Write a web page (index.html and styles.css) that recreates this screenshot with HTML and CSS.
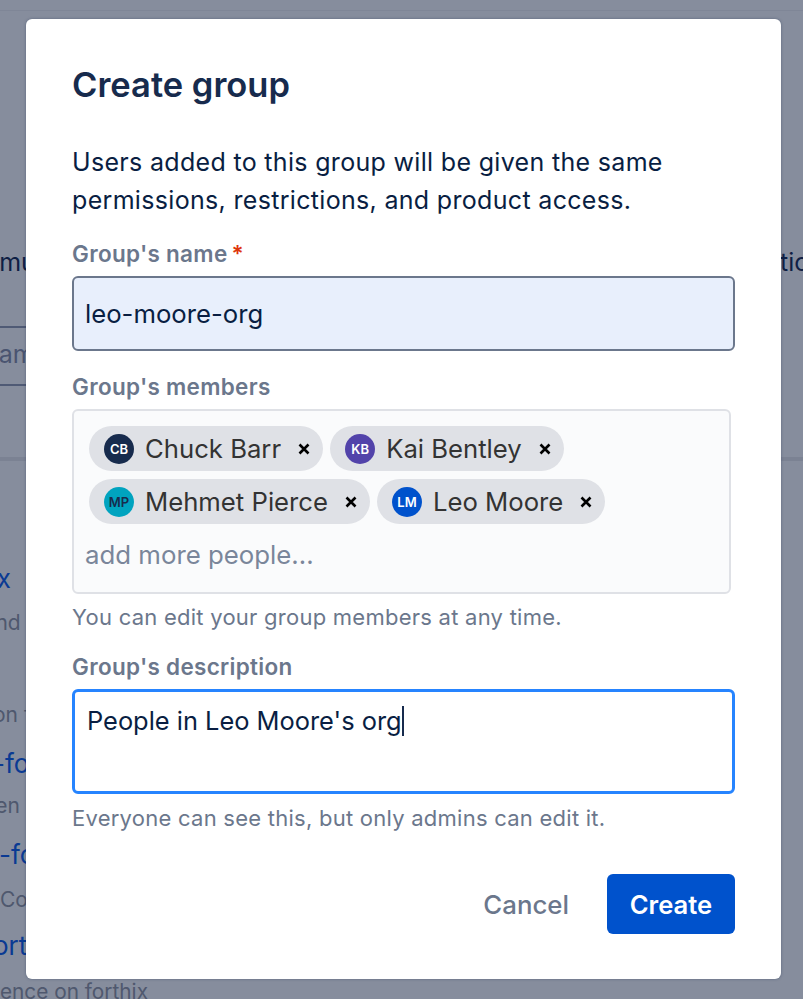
FILE: index.html
```html
<!DOCTYPE html>
<html lang="en">
<head>
<meta charset="utf-8">
<title>Create group</title>
<link rel="stylesheet" href="styles.css">
</head>
<body>
<div class="page">
  <div class="page-top"></div>
  <div class="tabs"><span class="tab tab-left">Community</span><span class="tab tab-right">Description</span></div>
  <div class="search-line"></div>
  <div class="search-text">Name</div>
  <div class="search-line line-2"></div>
  <div class="divider"></div>
  <ul class="results">
    <li class="r-link r1">forthix</li>
    <li class="r-sub r2">Find and</li>
    <li class="r-sub r3">Discussion f</li>
    <li class="r-link r4">team-fo</li>
    <li class="r-sub r5">Conferen</li>
    <li class="r-link r6">team-fo</li>
    <li class="r-sub r7">Con</li>
    <li class="r-link r8">support</li>
    <li class="r-sub r9">Experience on forthix</li>
  </ul>
</div>
<div class="modal">
  <h1 class="title">Create group</h1>
  <p class="intro">Users added to this group will be given the same permissions, restrictions, and product access.</p>
  <div class="label label-name">Group's name<span class="req">*</span></div>
  <div class="name-input">leo-moore-org</div>
  <div class="label label-members">Group's members</div>
  <div class="members">
    <div class="chips">
      <span class="chip"><span class="avatar a-cb">CB</span><span class="chip-name">Chuck Barr</span><svg class="x" viewBox="0 0 12 12"><path d="M1.5 1.5l9 9M10.5 1.5l-9 9"/></svg></span>
      <span class="chip"><span class="avatar a-kb">KB</span><span class="chip-name">Kai Bentley</span><svg class="x" viewBox="0 0 12 12"><path d="M1.5 1.5l9 9M10.5 1.5l-9 9"/></svg></span>
      <span class="chip"><span class="avatar a-mp">MP</span><span class="chip-name">Mehmet Pierce</span><svg class="x" viewBox="0 0 12 12"><path d="M1.5 1.5l9 9M10.5 1.5l-9 9"/></svg></span>
      <span class="chip"><span class="avatar a-lm">LM</span><span class="chip-name">Leo Moore</span><svg class="x" viewBox="0 0 12 12"><path d="M1.5 1.5l9 9M10.5 1.5l-9 9"/></svg></span>
    </div>
    <div class="placeholder">add more people...</div>
  </div>
  <div class="help help-members">You can edit your group members at any time.</div>
  <div class="label label-desc">Group's description</div>
  <div class="desc-input"><span class="desc-text">People in Leo Moore's org</span><span class="caret"></span></div>
  <div class="help help-desc">Everyone can see this, but only admins can edit it.</div>
  <div class="actions">
    <span class="cancel">Cancel</span>
    <span class="create">Create</span>
  </div>
</div>
</body>
</html>
```
FILE: styles.css
```css
* { box-sizing: border-box; }
html, body { margin: 0; padding: 0; }
body {
  width: 803px; height: 999px; overflow: hidden; position: relative;
  background: #868d9d; font-family: Inter, "Liberation Sans", sans-serif;
}
.page { height: 999px; overflow: hidden; display: flex; flex-direction: column; }
.page-top { height: 11px; border-bottom: 1px solid #7f8697; flex: none; }
.tabs { display: flex; justify-content: space-between; margin-top: 233px; font-size: 25px; line-height: 36px; color: #0f1f45; white-space: nowrap; flex: none; }
.tab-left { margin-left: -56px; }
.tab-right { margin-right: -21px; }
.search-line { height: 2px; width: 26px; background: #4f5a75; margin-top: 46px; flex: none; }
.search-text { font-size: 25px; line-height: 36px; color: #4a5470; margin-top: 8px; margin-left: -20px; flex: none; }
.line-2 { margin-top: 12px; }
.divider { height: 4px; background: #7b8293; margin-top: 71px; flex: none; }
.results { list-style: none; margin: 0; padding: 0; white-space: nowrap; }
.r-link { color: #0a3a93; font-size: 26px; line-height: 36px; }
.r-sub { color: #4f586e; font-size: 21px; line-height: 28px; }
.r1 { margin: 100px 0 0 -68px; }
.r2 { margin: 12px 0 0 -65px; }
.r3 { margin: 64px 0 0 -90px; }
.r4 { margin: 17px 0 0 -68px; }
.r5 { margin: 10px 0 0 -72px; }
.r6 { margin: 17px 0 0 -62px; }
.r7 { margin: 13px 0 0 0; }
.r8 { margin: 14px 0 0 -68px; }
.r9 { margin: 14px 0 0 -62px; font-size: 20.8px; }

.modal {
  position: absolute; left: 26px; top: 19px; width: 755px; height: 960px;
  background: #fff; border-radius: 6px; padding: 42px 46px 0;
  box-shadow: 0 0 3px rgba(9,30,66,.35);
}
.title { margin: 0; font-size: 34.5px; line-height: 48px; font-weight: 600; color: #172b4d; }
.intro { margin: 34px 0 0; font-size: 25px; line-height: 38px; letter-spacing: 0.32px; color: #091e42; width: 630px; }
.label { font-size: 22.5px; line-height: 28px; font-weight: 600; letter-spacing: 0.3px; color: #6b778c; }
.label-name { margin-top: 21px; }
.req { color: #de350b; margin-left: 4px; }
.name-input {
  margin-top: 8px; width: 663px; height: 75px; background: #e8effc; border: 2px solid #6b778c; border-radius: 6px;
  padding: 0 11px; font-size: 25.7px; line-height: 71px; color: #091e42;
}
.label-members { margin-top: 22px; }
.members {
  margin-top: 8px; width: 659px; height: 185px; background: #fafbfc; border: 2px solid #dfe1e6; border-radius: 6px;
  padding: 15px 11px 0;
}
.chips { display: flex; flex-wrap: wrap; gap: 8px 7px; padding-left: 4px; }
.chip { display: inline-flex; align-items: center; height: 45px; border-radius: 23px; background: #dfe1e6; padding: 0 13px 0 15px; }
.avatar { width: 30px; height: 30px; border-radius: 50%; display: flex; align-items: center; justify-content: center; font-size: 13px; font-weight: 600; color: #fff; flex: none; }
.a-cb { background: #172b4d; }
.a-kb { background: #5243aa; }
.a-mp { background: #00a3bf; color: #172b4d; }
.a-lm { background: #0052cc; }
.chip-name { font-size: 25.7px; line-height: 34px; color: #333; margin-left: 11px; }
.x { width: 12px; height: 12px; margin-left: 17px; flex: none; fill: none; stroke: #000; stroke-width: 2.6; }
.placeholder { margin-top: 13px; font-size: 25.8px; line-height: 36px; color: #7a869a; }
.help { font-size: 22px; line-height: 28px; letter-spacing: 0.25px; color: #6b778c; }
.help-members { margin-top: 9px; }
.label-desc { margin-top: 22px; }
.desc-input {
  margin-top: 8px; width: 663px; height: 105px; background: #fff; border: 3px solid #2684ff; border-radius: 6px;
  padding: 11px 12px; font-size: 25.4px; line-height: 36px; color: #091e42; display: flex; align-items: flex-start;
}
.caret { width: 2px; height: 30px; background: #172b4d; margin-top: 3px; }
.help-desc { margin-top: 10px; }
.actions { display: flex; justify-content: flex-end; align-items: center; width: 663px; margin-top: 42px; gap: 38px; }
.cancel { font-size: 25.8px; font-weight: 500; color: #6b778c; }
.create { width: 128px; height: 60px; background: #0052cc; border-radius: 6px; color: #fff; font-size: 25.6px; font-weight: 600; display: flex; align-items: center; justify-content: center; }
```
